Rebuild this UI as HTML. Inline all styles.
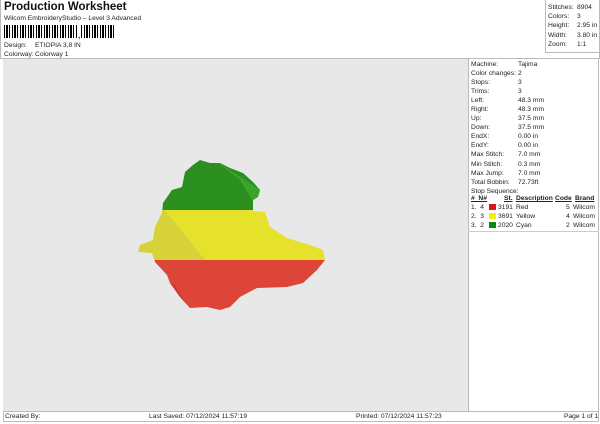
<!DOCTYPE html>
<html><head><style>
*{margin:0;padding:0;box-sizing:border-box}
body{width:600px;height:424px;background:#fff;font-family:"Liberation Sans",Arial,sans-serif;color:#222;position:relative;overflow:hidden;font-size:6.7px}
.a{position:absolute;white-space:nowrap}
</style></head><body>
<div class="a" style="left:4px;top:1px;font-size:11.5px;font-weight:bold;color:#111">Production Worksheet</div>
<div class="a" style="left:4px;top:15px">Wilcom EmbroideryStudio – Level 3 Advanced</div>
<div class="a" style="left:4px;top:25px;height:13px;width:112px;background:repeating-linear-gradient(90deg,#000 0 1px,#fff 1px 2px,#000 2px 4px,#fff 4px 5px,#000 5px 6px,#fff 6px 8px)"></div>
<div class="a" style="left:77px;top:25px;height:13px;width:4px;background:#fff"></div>
<div class="a" style="left:78px;top:31px;font-weight:bold;font-size:8px">,</div>
<div class="a" style="left:4px;top:42px">Design:</div><div class="a" style="left:35px;top:42px">ETIOPIA 3,8 IN</div>
<div class="a" style="left:4px;top:51px">Colorway:</div><div class="a" style="left:35px;top:51px">Colorway 1</div>
<div class="a" style="left:0;top:0;width:600px;height:59px;border:1px solid #bbb;border-top:none"></div>
<div class="a" style="left:545px;top:0;width:1px;height:53px;background:#bbb"></div>
<div class="a" style="left:545px;top:52px;width:55px;height:1px;background:#bbb"></div>
<div class="a" style="left:548px;top:3px;line-height:9.2px">Stitches:<br>Colors:<br>Height:<br>Width:<br>Zoom:</div>
<div class="a" style="left:577px;top:3px;line-height:9.2px">8904<br>3<br>2.95 in<br>3.80 in<br>1:1</div>
<div class="a" style="left:3px;top:59px;width:465px;height:352px;background:#e8e8e8"></div>
<div class="a" style="left:468px;top:59px;width:1px;height:352px;background:#bbb"></div>
<div class="a" style="left:598px;top:59px;width:1px;height:352px;background:#bbb"></div>
<div class="a" style="left:468px;top:231px;width:131px;height:1px;background:#ccc"></div>
<div class="a" style="left:471px;top:60px;line-height:9.05px">Machine:<br>Color changes:<br>Stops:<br>Trims:<br>Left:<br>Right:<br>Up:<br>Down:<br>EndX:<br>EndY:<br>Max Stitch:<br>Min Stitch:<br>Max Jump:<br>Total Bobbin:<br>Stop Sequence:</div>
<div class="a" style="left:518px;top:60px;line-height:9.05px">Tajima<br>2<br>3<br>3<br>48.3 mm<br>48.3 mm<br>37.5 mm<br>37.5 mm<br>0.00 in<br>0.00 in<br>7.0 mm<br>0.3 mm<br>7.0 mm<br>72.73ft</div>
<div class="a" style="left:471px;top:195px;font-weight:bold;text-decoration:underline">#&nbsp;&nbsp;N#</div>
<div class="a" style="left:504px;top:195px;font-weight:bold;text-decoration:underline">St.</div>
<div class="a" style="left:516px;top:195px;font-weight:bold;text-decoration:underline">Description</div>
<div class="a" style="left:555px;top:195px;font-weight:bold;text-decoration:underline">Code</div>
<div class="a" style="left:575px;top:195px;font-weight:bold;text-decoration:underline">Brand</div>
<div class="a" style="left:471px;top:203px;line-height:9px">1.&nbsp;&nbsp;4<br>2.&nbsp;&nbsp;3<br>3.&nbsp;&nbsp;2</div>
<div class="a" style="left:489px;top:204px;width:7px;height:6px;background:#e0141c"></div>
<div class="a" style="left:489px;top:213px;width:7px;height:6px;background:#f5f000"></div>
<div class="a" style="left:489px;top:222px;width:7px;height:6px;background:#0a8a14"></div>
<div class="a" style="left:498px;top:203px;line-height:9px">3191<br>3691<br>2020</div>
<div class="a" style="left:516px;top:203px;line-height:9px">Red<br>Yellow<br>Cyan</div>
<div class="a" style="left:566px;top:203px;line-height:9px">5<br>4<br>2</div>
<div class="a" style="left:573px;top:203px;line-height:9px">Wilcom<br>Wilcom<br>Wilcom</div>
<svg class="a" style="left:0;top:0" width="600" height="424">
<defs><clipPath id="c"><path d="M200,160L210,163L220,163L230,168L243,173L253,182L260,190L258,197L253,200L253,211L265,212L267,218L270,227L287,238L310,245L323,250L325,260L317,270L303,283L287,287L257,288L240,297L230,307L220,310L207,307L190,308L180,297L170,283L167,275L155,262L152,253L138,252L140,245L153,240L155,227L162,213L163,203L172,190L182,187L185,172L193,165Z"/></clipPath></defs>
<g clip-path="url(#c)">
<rect x="130" y="150" width="200" height="60" fill="#2a8f1e"/>
<polygon points="215,160 260,190 255,205 240,180" fill="#3aa52a"/>
<rect x="130" y="210" width="200" height="50" fill="#e6e22c"/>
<polygon points="130,210 165,210 205,260 130,260" fill="#d8d23a"/>
<rect x="130" y="260" width="200" height="60" fill="#dc4538"/>
<polygon points="130,270 175,285 190,310 130,320" fill="#cc3a30"/>
</g></svg>
<div class="a" style="left:3px;top:411px;width:596px;height:1px;background:#bbb"></div>
<div class="a" style="left:3px;top:421px;width:596px;height:1px;background:#bbb"></div>
<div class="a" style="left:3px;top:411px;width:1px;height:11px;background:#bbb"></div>
<div class="a" style="left:598px;top:411px;width:1px;height:11px;background:#bbb"></div>
<div class="a" style="left:5px;top:413px">Created By:</div>
<div class="a" style="left:149px;top:413px">Last Saved: 07/12/2024 11:57:19</div>
<div class="a" style="left:356px;top:413px">Printed: 07/12/2024 11:57:23</div>
<div class="a" style="left:564px;top:413px">Page 1 of 1</div>
</body></html>
